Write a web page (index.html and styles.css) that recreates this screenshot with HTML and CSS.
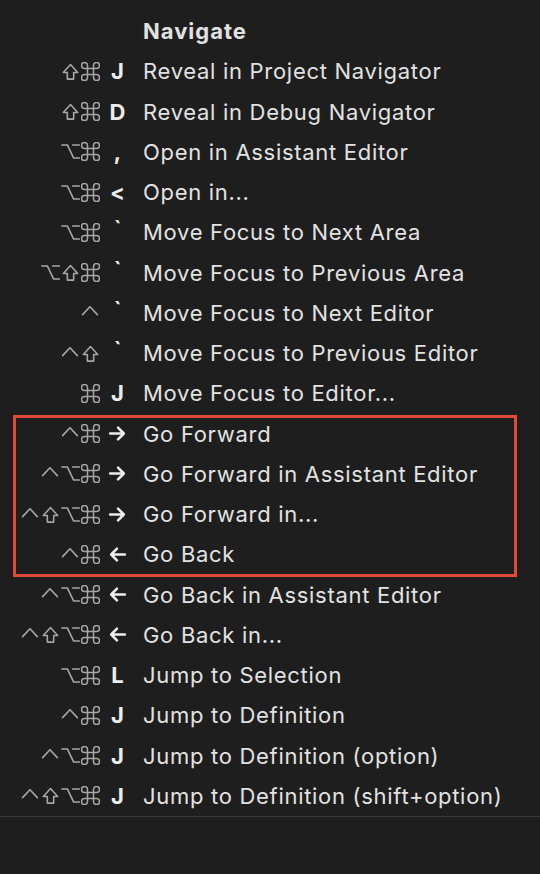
FILE: index.html
```html
<!DOCTYPE html>
<html>
	<head>
		<meta charset="UTF-8">
		<title>Navigate</title>
		<meta name="viewport" content="width=device-width, initial-scale=1.0">
		<link rel="stylesheet" href="styles.css">
	</head>
	<body>
		<svg class="defs" width="0" height="0">
			<symbol id="cmd" viewBox="2.5 2.5 19 19"><path d="M15 6v12a3 3 0 1 0 3-3H6a3 3 0 1 0 3 3V6a3 3 0 1 0-3 3h12a3 3 0 1 0-3-3"/></symbol>
			<symbol id="shift" viewBox="0 0 18 18"><path d="M6 16.2V10H2.2L9 2.4l6.8 7.6H12v6.2Z"/></symbol>
			<symbol id="opt" viewBox="0 0 18 18"><path d="M0.8 2.8H6l6 12.4h5.4M11 2.8h6.4"/></symbol>
			<symbol id="ctrl" viewBox="0 0 18 18"><path d="M1.5 11L8.5 3.5L15.5 11"/></symbol>
			<symbol id="right" viewBox="0 0 18 18"><path d="M2 9h13M9.5 3.5L15 9l-5.5 5.5"/></symbol>
			<symbol id="left" viewBox="0 0 18 18"><path d="M16 9H3M8.5 3.5L3 9l5.5 5.5"/></symbol>
		</svg>

		<div class="menu">
			<div class="row head">
				<div class="mods"></div>
				<div class="key"></div>
				<div class="label">Navigate</div>
			</div>

			<div class="row">
				<div class="mods"><svg class="m"><use href="#shift"/></svg><svg class="m"><use href="#cmd"/></svg></div>
				<div class="key">J</div>
				<div class="label">Reveal in Project Navigator</div>
			</div>
			<div class="row">
				<div class="mods"><svg class="m"><use href="#shift"/></svg><svg class="m"><use href="#cmd"/></svg></div>
				<div class="key">D</div>
				<div class="label">Reveal in Debug Navigator</div>
			</div>
			<div class="row">
				<div class="mods"><svg class="m"><use href="#opt"/></svg><svg class="m"><use href="#cmd"/></svg></div>
				<div class="key">,</div>
				<div class="label">Open in Assistant Editor</div>
			</div>
			<div class="row">
				<div class="mods"><svg class="m"><use href="#opt"/></svg><svg class="m"><use href="#cmd"/></svg></div>
				<div class="key">&lt;</div>
				<div class="label">Open in...</div>
			</div>
			<div class="row">
				<div class="mods"><svg class="m"><use href="#opt"/></svg><svg class="m"><use href="#cmd"/></svg></div>
				<div class="key tick">`</div>
				<div class="label">Move Focus to Next Area</div>
			</div>
			<div class="row">
				<div class="mods"><svg class="m"><use href="#opt"/></svg><svg class="m"><use href="#shift"/></svg><svg class="m"><use href="#cmd"/></svg></div>
				<div class="key tick">`</div>
				<div class="label">Move Focus to Previous Area</div>
			</div>
			<div class="row">
				<div class="mods"><svg class="m"><use href="#ctrl"/></svg></div>
				<div class="key tick">`</div>
				<div class="label">Move Focus to Next Editor</div>
			</div>
			<div class="row">
				<div class="mods"><svg class="m"><use href="#ctrl"/></svg><svg class="m"><use href="#shift"/></svg></div>
				<div class="key tick">`</div>
				<div class="label">Move Focus to Previous Editor</div>
			</div>
			<div class="row">
				<div class="mods"><svg class="m"><use href="#cmd"/></svg></div>
				<div class="key">J</div>
				<div class="label">Move Focus to Editor...</div>
			</div>

			<div class="group">
				<div class="row">
					<div class="mods"><svg class="m"><use href="#ctrl"/></svg><svg class="m"><use href="#cmd"/></svg></div>
					<div class="key"><svg class="arrow"><use href="#right"/></svg></div>
					<div class="label">Go Forward</div>
				</div>
				<div class="row">
					<div class="mods"><svg class="m"><use href="#ctrl"/></svg><svg class="m"><use href="#opt"/></svg><svg class="m"><use href="#cmd"/></svg></div>
					<div class="key"><svg class="arrow"><use href="#right"/></svg></div>
					<div class="label">Go Forward in Assistant Editor</div>
				</div>
				<div class="row">
					<div class="mods"><svg class="m"><use href="#ctrl"/></svg><svg class="m"><use href="#shift"/></svg><svg class="m"><use href="#opt"/></svg><svg class="m"><use href="#cmd"/></svg></div>
					<div class="key"><svg class="arrow"><use href="#right"/></svg></div>
					<div class="label">Go Forward in...</div>
				</div>
				<div class="row">
					<div class="mods"><svg class="m"><use href="#ctrl"/></svg><svg class="m"><use href="#cmd"/></svg></div>
					<div class="key"><svg class="arrow"><use href="#left"/></svg></div>
					<div class="label">Go Back</div>
				</div>
			</div>

			<div class="row">
				<div class="mods"><svg class="m"><use href="#ctrl"/></svg><svg class="m"><use href="#opt"/></svg><svg class="m"><use href="#cmd"/></svg></div>
				<div class="key"><svg class="arrow"><use href="#left"/></svg></div>
				<div class="label">Go Back in Assistant Editor</div>
			</div>
			<div class="row">
				<div class="mods"><svg class="m"><use href="#ctrl"/></svg><svg class="m"><use href="#shift"/></svg><svg class="m"><use href="#opt"/></svg><svg class="m"><use href="#cmd"/></svg></div>
				<div class="key"><svg class="arrow"><use href="#left"/></svg></div>
				<div class="label">Go Back in...</div>
			</div>
			<div class="row">
				<div class="mods"><svg class="m"><use href="#opt"/></svg><svg class="m"><use href="#cmd"/></svg></div>
				<div class="key">L</div>
				<div class="label">Jump to Selection</div>
			</div>
			<div class="row">
				<div class="mods"><svg class="m"><use href="#ctrl"/></svg><svg class="m"><use href="#cmd"/></svg></div>
				<div class="key">J</div>
				<div class="label">Jump to Definition</div>
			</div>
			<div class="row">
				<div class="mods"><svg class="m"><use href="#ctrl"/></svg><svg class="m"><use href="#opt"/></svg><svg class="m"><use href="#cmd"/></svg></div>
				<div class="key">J</div>
				<div class="label">Jump to Definition (option)</div>
			</div>
			<div class="row">
				<div class="mods"><svg class="m"><use href="#ctrl"/></svg><svg class="m"><use href="#shift"/></svg><svg class="m"><use href="#opt"/></svg><svg class="m"><use href="#cmd"/></svg></div>
				<div class="key">J</div>
				<div class="label">Jump to Definition (shift+option)</div>
			</div>
		</div>
	</body>
</html>
```

FILE: styles.css
```css
*{
	margin: 0;
	padding: 0;
	box-sizing: border-box;
}
html, body{
	background: #1e1e1e;
}
body{
	font-family: Inter, "Noto Sans", "Liberation Sans", sans-serif;
	color: #e2e2e2;
	min-height: 874px;
}
.defs{
	position: absolute;
}
.menu{
	padding-top: 11px;
	border-bottom: 1px solid #3a3a3a;
}
.row{
	display: grid;
	grid-template-columns: 100px 35px 1fr;
	height: 40.25px;
	align-items: center;
}
.head .label{
	font-weight: 700;
	letter-spacing: 1px;
}
.mods{
	display: flex;
	justify-content: flex-end;
	align-items: center;
	gap: 1px;
}
.m{
	width: 19px;
	height: 19px;
	fill: none;
	stroke: #a6a6a6;
	stroke-width: 1.5;
	stroke-linejoin: round;
	stroke-linecap: round;
}
.key{
	text-align: center;
	font-size: 22px;
	font-weight: 700;
	color: #ececec;
	display: flex;
	justify-content: center;
	align-items: center;
}
.key.tick{
	align-self: start;
	padding-top: 4px;
}
.arrow{
	width: 19px;
	height: 19px;
	fill: none;
	stroke: #ececec;
	stroke-width: 2.4;
	stroke-linecap: round;
	stroke-linejoin: round;
}
.label{
	padding-left: 8px;
	font-size: 22px;
	letter-spacing: 0.7px;
	white-space: nowrap;
}
.group{
	position: relative;
}
.group::after{
	content: "";
	position: absolute;
	left: 13px;
	right: 23px;
	top: 1px;
	bottom: -2px;
	border: 3px solid #e04a38;
	pointer-events: none;
}
```
